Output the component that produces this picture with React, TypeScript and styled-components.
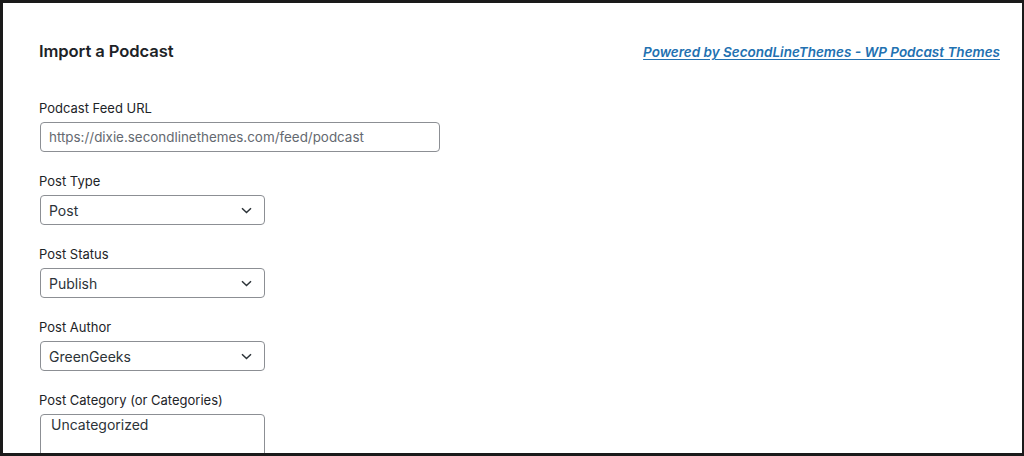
import React, { FC } from 'react'
import styled, { createGlobalStyle } from 'styled-components'

const GlobalStyle = createGlobalStyle`
  html, body {
    margin: 0;
    padding: 0;
    background: #ffffff;
  }
  body {
    font-family: Inter, "Liberation Sans", sans-serif;
    color: #1d2327;
  }
`

const Frame = styled.div`
  box-sizing: border-box;
  width: 1024px;
  height: 456px;
  border: 3px solid #1a1a1a;
  border-right-width: 2px;
  overflow: hidden;
  padding: 35px 22px 0 37px;
`

const Header = styled.div`
  display: flex;
  align-items: center;
  justify-content: space-between;
  height: 26px;
`

const Title = styled.h1`
  margin: 0 0 0 -1px;
  font-size: 16.6px;
  font-weight: 600;
  letter-spacing: -0.1px;
`

const PoweredLink = styled.a`
  font-size: 13.5px;
  font-weight: 600;
  font-style: italic;
  color: #2271b1;
  text-decoration: underline;
  text-underline-offset: 2px;
  margin-top: 2px;
`

const Form = styled.div`
  display: flex;
  flex-direction: column;
  gap: 19px;
  margin-top: 34px;
`

const Field = styled.div`
  display: flex;
  flex-direction: column;
  gap: 4px;
`

const Label = styled.label`
  margin-left: -1px;
  font-size: 13px;
  line-height: 20px;
  color: #1d2327;
`

const TextInput = styled.div`
  box-sizing: border-box;
  width: 400px;
  height: 30px;
  border: 1px solid #8c8f94;
  border-radius: 4px;
  padding: 0 8px;
  display: flex;
  align-items: center;
  font-size: 13.4px;
  color: #646970;
`

const Select = styled.div`
  box-sizing: border-box;
  width: 225px;
  height: 30px;
  border: 1px solid #8c8f94;
  border-radius: 4px;
  padding: 0 12px 0 8px;
  display: flex;
  align-items: center;
  justify-content: space-between;
  font-size: 14px;
  color: #2c3338;
`

const MultiSelect = styled.div`
  box-sizing: border-box;
  width: 225px;
  height: 60px;
  border: 1px solid #8c8f94;
  border-radius: 4px;
  padding: 1px 10px;
  font-size: 14px;
  line-height: 18px;
  color: #2c3338;
`

const Chevron: FC = () => (
  <svg width="11" height="7" viewBox="0 0 11 7" fill="none">
    <path d="M1 1.2 5.5 5.5 10 1.2" stroke="#2c3338" strokeWidth="1.5" />
  </svg>
)

const SelectField: FC<{ label: string; value: string }> = ({ label, value }) => (
  <Field>
    <Label>{label}</Label>
    <Select>
      <span>{value}</span>
      <Chevron />
    </Select>
  </Field>
)

export default function App() {
  return (
    <>
      <GlobalStyle />
      <Frame>
        <Header>
          <Title>Import a Podcast</Title>
          <PoweredLink href="#">Powered by SecondLineThemes - WP Podcast Themes</PoweredLink>
        </Header>
        <Form>
          <Field>
            <Label>Podcast Feed URL</Label>
            <TextInput>https://dixie.secondlinethemes.com/feed/podcast</TextInput>
          </Field>
          <SelectField label="Post Type" value="Post" />
          <SelectField label="Post Status" value="Publish" />
          <SelectField label="Post Author" value="GreenGeeks" />
          <Field>
            <Label>Post Category (or Categories)</Label>
            <MultiSelect>Uncategorized</MultiSelect>
          </Field>
        </Form>
      </Frame>
    </>
  )
}
